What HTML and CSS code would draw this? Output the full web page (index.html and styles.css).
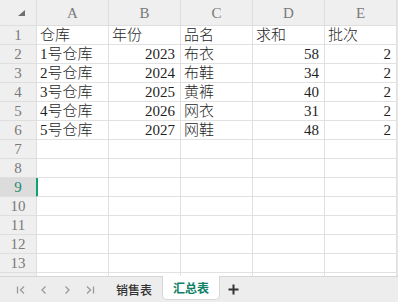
FILE: index.html
```html
<!DOCTYPE html>
<html lang="zh-CN">
<head>
<meta charset="utf-8">
<title>汇总表</title>
<link rel="stylesheet" href="styles.css">
</head>
<body>
<div class="app">
  <div class="grid-wrap">
    <div class="sheet">
      <div class="hd corner"><svg width="8" height="7" viewBox="0 0 8 7"><polygon points="8,0 8,6 1,6" fill="#6f6f6f"/></svg></div>
      <div class="hd col">A</div><div class="hd col">B</div><div class="hd col">C</div><div class="hd col">D</div><div class="hd col">E</div>

      <div class="hd row">1</div><div class="c">仓库</div><div class="c">年份</div><div class="c">品名</div><div class="c">求和</div><div class="c">批次</div>
      <div class="hd row">2</div><div class="c">1号仓库</div><div class="c num">2023</div><div class="c">布衣</div><div class="c num">58</div><div class="c num">2</div>
      <div class="hd row">3</div><div class="c">2号仓库</div><div class="c num">2024</div><div class="c">布鞋</div><div class="c num">34</div><div class="c num">2</div>
      <div class="hd row">4</div><div class="c">3号仓库</div><div class="c num">2025</div><div class="c">黄裤</div><div class="c num">40</div><div class="c num">2</div>
      <div class="hd row">5</div><div class="c">4号仓库</div><div class="c num">2026</div><div class="c">网衣</div><div class="c num">31</div><div class="c num">2</div>
      <div class="hd row">6</div><div class="c">5号仓库</div><div class="c num">2027</div><div class="c">网鞋</div><div class="c num">48</div><div class="c num">2</div>
      <div class="hd row">7</div><div class="c"></div><div class="c"></div><div class="c"></div><div class="c"></div><div class="c"></div>
      <div class="hd row">8</div><div class="c"></div><div class="c"></div><div class="c"></div><div class="c"></div><div class="c"></div>
      <div class="hd row sel">9</div><div class="c active"></div><div class="c"></div><div class="c"></div><div class="c"></div><div class="c"></div>
      <div class="hd row">10</div><div class="c"></div><div class="c"></div><div class="c"></div><div class="c"></div><div class="c"></div>
      <div class="hd row">11</div><div class="c"></div><div class="c"></div><div class="c"></div><div class="c"></div><div class="c"></div>
      <div class="hd row">12</div><div class="c"></div><div class="c"></div><div class="c"></div><div class="c"></div><div class="c"></div>
      <div class="hd row">13</div><div class="c"></div><div class="c"></div><div class="c"></div><div class="c"></div><div class="c"></div>
      <div class="hd row"></div><div class="c"></div><div class="c"></div><div class="c"></div><div class="c"></div><div class="c"></div>
    </div>
  </div>
  <div class="tabbar">
    <div class="nav">
      <svg class="ico" width="10" height="10" viewBox="0 0 10 10"><path d="M1.5 1.5V8.5M8 1.5L4.5 5L8 8.5" /></svg>
      <svg class="ico" width="10" height="10" viewBox="0 0 10 10"><path d="M6.5 1.5L3 5L6.5 8.5" /></svg>
      <svg class="ico" width="10" height="10" viewBox="0 0 10 10"><path d="M3.5 1.5L7 5L3.5 8.5" /></svg>
      <svg class="ico" width="10" height="10" viewBox="0 0 10 10"><path d="M2 1.5L5.5 5L2 8.5M8.5 1.5V8.5" /></svg>
    </div>
    <div class="tab">销售表</div>
    <div class="tab current">汇总表</div>
    <div class="add"><svg width="11" height="11" viewBox="0 0 11 11"><path d="M5.5 0.5V10.5M0.5 5.5H10.5" stroke="#333" stroke-width="2"/></svg></div>
  </div>
</div>
</body>
</html>
```
FILE: styles.css
```css
* { box-sizing: border-box; }
html, body { margin: 0; padding: 0; }
body {
  width: 398px;
  height: 302px;
  overflow: hidden;
  background: #ececec;
}
.app {
  width: 398px;
  height: 302px;
  display: flex;
  flex-direction: column;
}
.grid-wrap {
  height: 276px;
  overflow: hidden;
  background: #fff;
  border-right: 1px solid #e6e6e6;
}
.sheet {
  display: grid;
  grid-template-columns: 37px 72px 72px 72px 72px 72px;
  grid-template-rows: 26px;
  grid-auto-rows: 19px;
  font-family: "Liberation Serif", "Noto Sans CJK SC", serif;
  font-size: 15px;
  color: #1f1f1f;
}
.sheet > div {
  border-right: 1px solid #e1e1e1;
  border-bottom: 1px solid #e1e1e1;
  overflow: hidden;
  white-space: nowrap;
}
.hd {
  background: #efefef;
  color: #7a7a7a;
  display: flex;
  align-items: center;
  justify-content: center;
  font-size: 15px;
}
.sheet > .hd { border-color: #dedede; }
.col { padding-top: 1px; }
.corner { justify-content: flex-start; padding-left: 17px; padding-top: 2px; }
.row { font-size: 15px; line-height: 18px; }
.row.sel { background: #dcdcdc; color: #1b8a6e; }
.c {
  padding: 0 3px;
  line-height: 18px;
  font-weight: 300;
}
.c.num { text-align: right; padding-right: 5px; font-weight: 400; }
.c.active { box-shadow: inset 1px 0 0 #13a070; }
.sheet > .row.sel { border-right-color: #13a070; }
.tabbar {
  flex: 1;
  display: flex;
  align-items: stretch;
  background: #ededed;
  border-top: 1px solid #d6d6d6;
  font-family: "Noto Sans CJK SC", "Noto Sans", sans-serif;
  font-size: 12px;
}
.nav {
  display: flex;
  align-items: center;
  gap: 13px;
  padding-left: 16px;
  width: 106px;
}
.ico { fill: none; stroke: #9a9a9a; stroke-width: 1.3; }
.tab {
  display: flex;
  align-items: center;
  justify-content: center;
  width: 56px;
  color: #333;
  font-weight: 500;
}
.tab.current {
  margin-top: -1px;
  margin-bottom: 2px;
  background: #fff;
  color: #0f7f68;
  font-weight: 700;
  border: 1px solid #d6d6d6;
  border-top: none;
  border-radius: 0 0 5px 5px;
  width: 58px;
}
.add {
  display: flex;
  align-items: center;
  padding-left: 8px;
}
```
